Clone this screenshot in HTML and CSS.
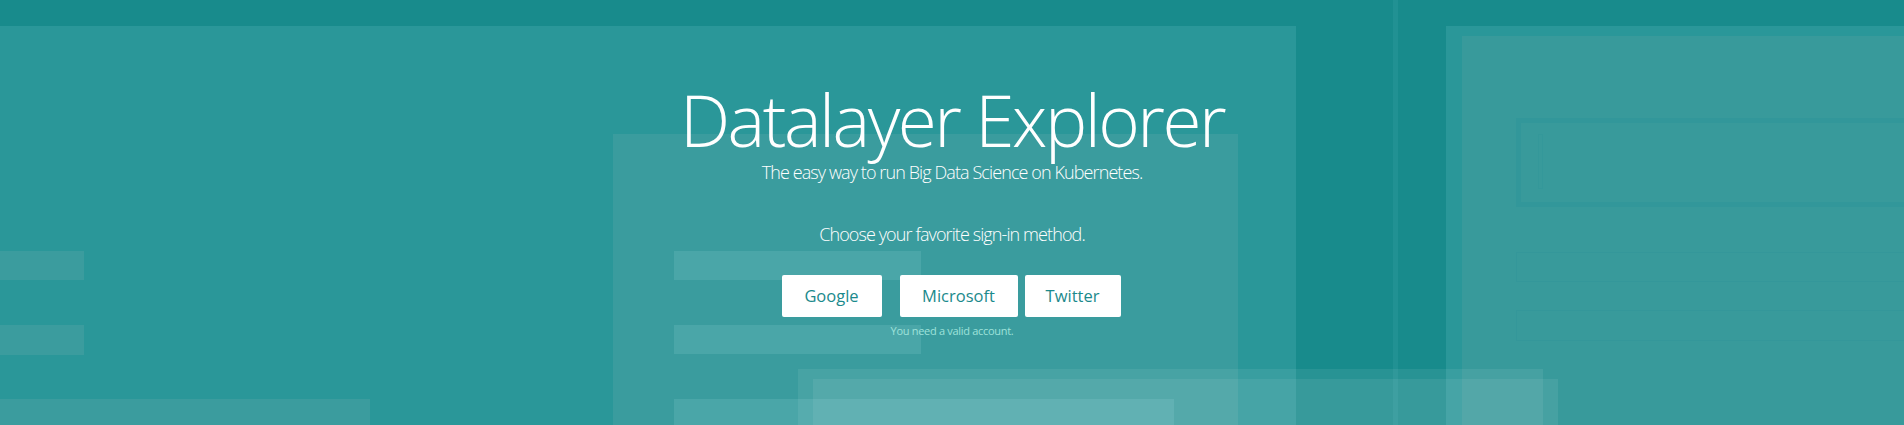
FILE: index.html
```html
<!DOCTYPE html>
<html lang="en">
<head>
<meta charset="utf-8">
<title>Datalayer Explorer</title>
<link rel="stylesheet" href="styles.css">
</head>
<body>
<div class="page">
  <div class="backdrop" aria-hidden="true">
    <div class="shape panel-left"></div>
    <div class="shape vline"></div>
    <div class="shape panel-right"></div>
    <div class="shape panel-right-inner"></div>
    <div class="shape box-main"></div>
    <div class="shape box-main-line"></div>
    <div class="shape box-row box-row-1"></div>
    <div class="shape box-row box-row-2"></div>
    <div class="shape bar-left bar-left-1"></div>
    <div class="shape bar-left bar-left-2"></div>
    <div class="shape bar-left bar-left-3"></div>
    <div class="shape panel-center"></div>
    <div class="shape bar-center bar-center-1"></div>
    <div class="shape bar-center bar-center-2"></div>
    <div class="shape bar-center bar-center-3"></div>
    <div class="shape veil veil-1"></div>
    <div class="shape veil veil-2"></div>
  </div>
  <main class="hero">
    <h1 class="title">Datalayer Explorer</h1>
    <p class="subtitle">The easy way to run Big Data Science on Kubernetes.</p>
    <p class="choose">Choose your favorite sign-in method.</p>
    <div class="buttons">
      <button class="btn btn-google">Google</button>
      <button class="btn btn-microsoft">Microsoft</button>
      <button class="btn btn-twitter">Twitter</button>
    </div>
    <p class="note">You need a valid account.</p>
  </main>
</div>
</body>
</html>
```

FILE: styles.css
```css
html, body {
  margin: 0;
  padding: 0;
  height: 100%;
  overflow: hidden;
  background: #188b8c;
}

.page {
  position: relative;
  width: 100%;
  height: 425px;
  overflow: hidden;
  background: #188b8c;
  font-family: "Open Sans", "Noto Sans", sans-serif;
}

.backdrop {
  position: absolute;
  inset: 0;
  z-index: 0;
}

.shape {
  position: absolute;
}

.panel-left {
  left: 0;
  top: 26px;
  width: 1296px;
  bottom: 0;
  background: #2a9799;
}

.vline {
  left: 1393px;
  top: 0;
  width: 5px;
  bottom: 0;
  background: #219193;
}

.panel-right {
  left: 1446px;
  top: 26px;
  right: 0;
  bottom: 0;
  background: #2a9799;
}

.panel-right-inner {
  left: 1462px;
  top: 36px;
  right: 0;
  bottom: 0;
  background: #389a9b;
}

.box-main {
  left: 1516px;
  top: 118px;
  right: -10px;
  height: 89px;
  box-sizing: border-box;
  border: 5px solid #32979a;
  background: #389a9b;
}

.box-main-line {
  left: 1538px;
  top: 134px;
  width: 5px;
  height: 55px;
  box-sizing: border-box;
  border: 1px solid #34989a;
}

.box-row {
  left: 1516px;
  right: -10px;
  box-sizing: border-box;
  border: 1px solid #34979a;
}

.box-row-1 { top: 252px; height: 30px; }
.box-row-2 { top: 310px; height: 31px; }

.bar-left {
  left: 0;
  background: #3b9c9e;
}

.bar-left-1 { top: 251px; width: 84px; height: 29px; }
.bar-left-2 { top: 325px; width: 84px; height: 30px; }
.bar-left-3 { top: 399px; width: 370px; bottom: 0; }

.panel-center {
  left: 613px;
  top: 134px;
  width: 625px;
  bottom: 0;
  background: #3a9c9e;
}

.bar-center {
  left: 674px;
  background: #4aa6a8;
}

.bar-center-1 { top: 251px; width: 247px; height: 29px; }
.bar-center-2 { top: 325px; width: 247px; height: 29px; }
.bar-center-3 { top: 399px; width: 500px; bottom: 0; }

.veil {
  background: rgba(255, 255, 255, 0.07);
}

.veil-1 { left: 798px; top: 369px; width: 745px; bottom: 0; }
.veil-2 { left: 813px; top: 379px; width: 745px; bottom: 0; }

.hero {
  position: relative;
  z-index: 1;
  display: flex;
  flex-direction: column;
  align-items: center;
  padding-top: 84px;
  color: #ffffff;
}

.title {
  margin: 0;
  font-size: 71px;
  line-height: 71px;
  font-weight: 300;
  letter-spacing: -2.5px;
  white-space: nowrap;
}

.subtitle {
  margin: 10px 0 0;
  font-size: 18px;
  line-height: 14px;
  font-weight: 300;
  letter-spacing: -0.9px;
}

.choose {
  margin: 45px 0 0;
  font-size: 18px;
  line-height: 20px;
  font-weight: 300;
  letter-spacing: -0.9px;
}

.buttons {
  margin-top: 31px;
  margin-right: 2px;
  display: flex;
}

.btn {
  height: 42px;
  padding: 0;
  border: 0;
  border-radius: 2px;
  background: #ffffff;
  color: #1b8a8c;
  font-family: "Open Sans", "Noto Sans", sans-serif;
  font-size: 16.5px;
  line-height: 42px;
  font-weight: 400;
  letter-spacing: 0;
}

.btn-google { width: 100px; }
.btn-microsoft { width: 118px; margin-left: 18px; }
.btn-twitter { width: 96px; margin-left: 7px; }

.note {
  margin: 7px 0 0;
  font-size: 11px;
  line-height: 14px;
  font-weight: 400;
  color: #9ee2da;
  letter-spacing: -0.3px;
}
```
